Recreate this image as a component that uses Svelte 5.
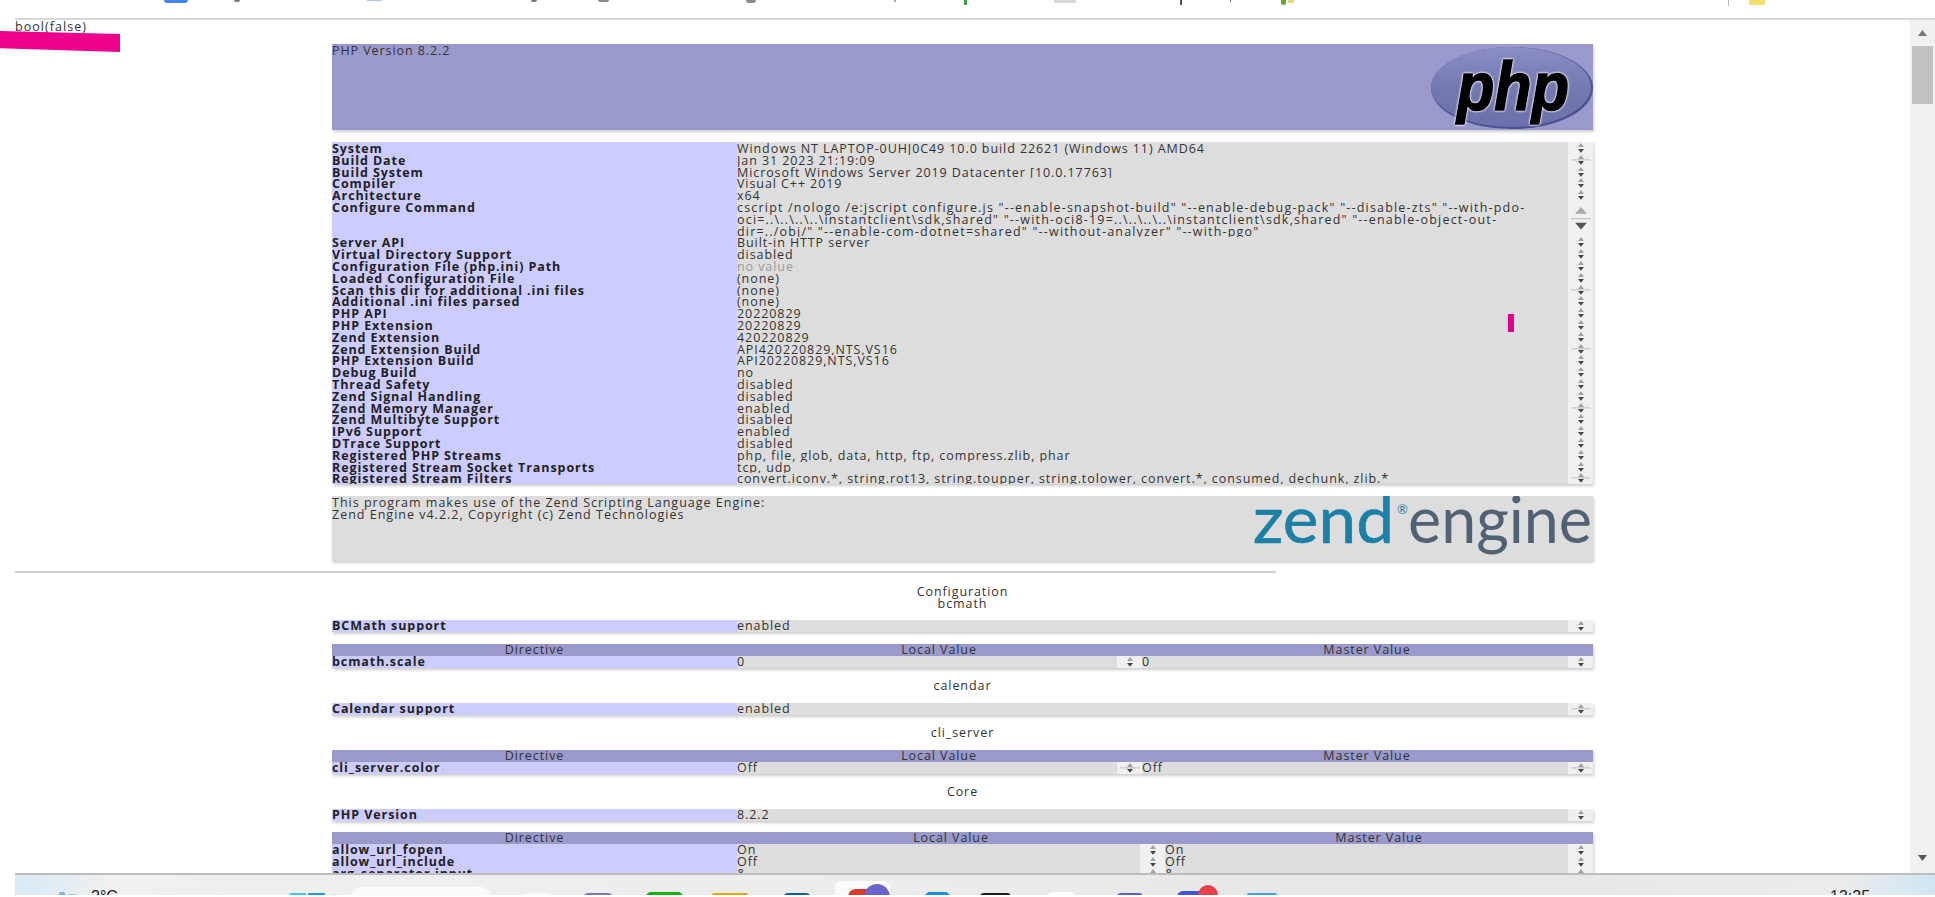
<script>
  const strip = [
    { x: 164, w: 24, h: 3, c: '#4285f4', r: '0 0 4px 4px' },
    { x: 234, w: 6, h: 2, c: '#777', r: '0 0 4px 4px' },
    { x: 367, w: 15, h: 1, c: '#a9c4f5', r: '0' },
    { x: 531, w: 6, h: 2, c: '#777', r: '0 0 4px 4px' },
    { x: 598, w: 11, h: 2, c: '#8a8a8a', r: '0 0 4px 4px' },
    { x: 746, w: 10, h: 3, c: '#8a8a8a', r: '0 0 4px 4px' },
    { x: 894, w: 2, h: 2, c: '#aaa', r: '0' },
    { x: 964, w: 3, h: 5, c: '#3c9a4a', r: '0' },
    { x: 1054, w: 22, h: 3, c: '#d8d8d8', r: '0' },
    { x: 1180, w: 2, h: 5, c: '#555', r: '0' },
    { x: 1230, w: 1, h: 2, c: '#777', r: '0' },
    { x: 1281, w: 5, h: 5, c: '#6aa52e', r: '0 0 3px 3px' },
    { x: 1288, w: 6, h: 3, c: '#dcd98a', r: '0' },
    { x: 1728, w: 1, h: 6, c: '#bbb', r: '0' },
    { x: 1749, w: 16, h: 5, c: '#f7dc6f', r: '0 0 2px 2px' }
  ]

  const dock = [
    { x: 59, w: 6, y: 17, h: 5, c: '#7fb2dc', r: '2px' },
    { x: 68, w: 8, y: 19, h: 3, c: '#9cc6e6', r: '2px' },
    { x: 290, w: 16, y: 18, h: 4, c: '#3cc4f2', r: '1px 1px 0 0' },
    { x: 308, w: 17, y: 18, h: 4, c: '#1e9ae0', r: '1px 1px 0 0' },
    { x: 351, w: 140, y: 12, h: 10, c: '#fbfbfb', r: '14px 14px 0 0' },
    { x: 524, w: 26, y: 18, h: 4, c: '#fafafa', r: '2px 2px 0 0' },
    { x: 584, w: 28, y: 18, h: 4, c: '#7a74c4', r: '14px 14px 0 0' },
    { x: 646, w: 37, y: 17, h: 5, c: '#12b312', r: '6px 6px 0 0' },
    { x: 712, w: 36, y: 18, h: 4, c: '#e3a61d', r: '2px 2px 0 0' },
    { x: 784, w: 26, y: 18, h: 4, c: '#0a5cad', r: '12px 12px 0 0' },
    { x: 835, w: 55, y: 6, h: 16, c: '#fafafa', r: '6px 6px 0 0' },
    { x: 848, w: 30, y: 14, h: 8, c: '#e0392b', r: '15px 15px 0 0' },
    { x: 864, w: 26, y: 9, h: 13, c: '#6a63c9', r: '13px 13px 0 0' },
    { x: 925, w: 25, y: 17, h: 5, c: '#1b8fe0', r: '12px 12px 0 0' },
    { x: 980, w: 31, y: 18, h: 4, c: '#1b1b24', r: '6px 6px 0 0' },
    { x: 1047, w: 28, y: 17, h: 5, c: '#ffffff', r: '14px 14px 0 0' },
    { x: 1117, w: 26, y: 18, h: 4, c: '#5a5fd0', r: '13px 13px 0 0' },
    { x: 1177, w: 30, y: 16, h: 6, c: '#4353d8', r: '15px 15px 0 0' },
    { x: 1198, w: 20, y: 10, h: 12, c: '#e8424c', r: '10px 10px 0 0' },
    { x: 1247, w: 30, y: 18, h: 4, c: '#3fa2e8', r: '2px 2px 0 0' },
    { x: 1308, w: 35, y: 20, h: 2, c: '#7d7d7d', r: '2px 2px 0 0' }
  ]

  const general = [
    { k: 'System', v: 'Windows NT LAPTOP-0UHJ0C49 10.0 build 22621 (Windows 11) AMD64' },
    { k: 'Build Date', v: 'Jan 31 2023 21:19:09', line: true },
    { k: 'Build System', v: 'Microsoft Windows Server 2019 Datacenter [10.0.17763]' },
    { k: 'Compiler', v: 'Visual C++ 2019' },
    { k: 'Architecture', v: 'x64' },
    {
      k: 'Configure Command',
      v: 'cscript /nologo /e:jscript configure.js "--enable-snapshot-build" "--enable-debug-pack" "--disable-zts" "--with-pdo-oci=..\\..\\..\\..\\instantclient\\sdk,shared" "--with-oci8-19=..\\..\\..\\..\\instantclient\\sdk,shared" "--enable-object-out-dir=../obj/" "--enable-com-dotnet=shared" "--without-analyzer" "--with-pgo"',
      big: true
    },
    { k: 'Server API', v: 'Built-in HTTP server' },
    { k: 'Virtual Directory Support', v: 'disabled' },
    { k: 'Configuration File (php.ini) Path', v: 'no value', muted: true },
    { k: 'Loaded Configuration File', v: '(none)' },
    { k: 'Scan this dir for additional .ini files', v: '(none)', line: true },
    { k: 'Additional .ini files parsed', v: '(none)' },
    { k: 'PHP API', v: '20220829' },
    { k: 'PHP Extension', v: '20220829' },
    { k: 'Zend Extension', v: '420220829' },
    { k: 'Zend Extension Build', v: 'API420220829,NTS,VS16', line: true },
    { k: 'PHP Extension Build', v: 'API20220829,NTS,VS16' },
    { k: 'Debug Build', v: 'no' },
    { k: 'Thread Safety', v: 'disabled' },
    { k: 'Zend Signal Handling', v: 'disabled' },
    { k: 'Zend Memory Manager', v: 'enabled', line: true },
    { k: 'Zend Multibyte Support', v: 'disabled' },
    { k: 'IPv6 Support', v: 'enabled' },
    { k: 'DTrace Support', v: 'disabled' },
    { k: 'Registered PHP Streams', v: 'php, file, glob, data, http, ftp, compress.zlib, phar' },
    { k: 'Registered Stream Socket Transports', v: 'tcp, udp' },
    { k: 'Registered Stream Filters', v: 'convert.iconv.*, string.rot13, string.toupper, string.tolower, convert.*, consumed, dechunk, zlib.*', line: true }
  ]

  const allow = [
    { k: 'allow_url_fopen', a: 'On', b: 'On' },
    { k: 'allow_url_include', a: 'Off', b: 'Off' },
    { k: 'arg_separator.input', a: '&', b: '&' }
  ]
</script>

{#snippet spin(line = false, big = false)}
  <span class="gutter">
    {#if big}
      <svg width="24" height="35.4" viewBox="0 0 24 36">
        <polygon points="12,6 18,13 6,13" fill="#a8a8a8" />
        <line x1="2" y1="18" x2="22" y2="18" stroke="#bbb" />
        <polygon points="6,22 18,22 12,29" fill="#555" />
      </svg>
    {:else}
      <svg width="24" height="11.8" viewBox="0 0 24 12">
        {#if line}
          <line x1="2" y1="6" x2="22" y2="6" stroke="#bbb" />
        {/if}
        <polygon points="12,1 15,5 9,5" fill="#a0a0a0" />
        <polygon points="9,7 15,7 12,11" fill="#444" />
      </svg>
    {/if}
  </span>
{/snippet}

{#snippet pair(k, v, line = false)}
  <div class="table">
    <div class="row two">
      <span class="key">{k}</span>
      <span class="val">{v}</span>
      {@render spin(line)}
    </div>
  </div>
{/snippet}

{#snippet directive(k, a, b, wide = false, line = false)}
  <div class="row three" class:wide>
    <span class="key">{k}</span>
    <span class="val">{a}</span>
    {@render spin(line)}
    <span class="val">{b}</span>
    {@render spin(line)}
  </div>
{/snippet}

{#snippet head(wide = false)}
  <div class="row head" class:wide>
    <span>Directive</span>
    <span>Local Value</span>
    <span>Master Value</span>
  </div>
{/snippet}

<div class="screen">
  <div class="strip">
    {#each strip as s}
      <i style="left:{s.x}px;width:{s.w}px;height:{s.h}px;background:{s.c};border-radius:{s.r}"></i>
    {/each}
  </div>

  <div class="main">
    <div class="content">
      <div class="dump">bool(false)</div>
      <div class="caret"></div>

      <div class="center">
        <div class="banner">
          <span class="version">PHP Version 8.2.2</span>
          <svg class="php" width="164" height="86" viewBox="0 0 164 86">
            <defs>
              <linearGradient id="oval" x1="0" y1="0" x2="0" y2="1">
                <stop offset="0" stop-color="#8a8ec4" />
                <stop offset="0.5" stop-color="#7579b2" />
                <stop offset="1" stop-color="#6c70ab" />
              </linearGradient>
            </defs>
            <ellipse cx="82" cy="44" rx="81" ry="41" fill="#4c5291" />
            <ellipse cx="81" cy="43" rx="80" ry="40" fill="url(#oval)" />
            <text class="php-mark" x="27" y="66" textLength="112" lengthAdjust="spacingAndGlyphs">php</text>
          </svg>
        </div>

        <div class="table">
          {#each general as r}
            <div class="row two">
              <span class="key">{r.k}</span>
              <span class="val" class:muted={r.muted} class:long={r.big}>{r.v}</span>
              {@render spin(r.line, r.big)}
            </div>
          {/each}
        </div>

        <div class="zend">
          <div class="zend-text">
            This program makes use of the Zend Scripting Language Engine:<br />
            Zend Engine v4.2.2, Copyright (c) Zend Technologies
          </div>
          <svg width="340" height="65" viewBox="0 0 340 65">
            <text class="zend-mark" x="0" y="47" textLength="141" lengthAdjust="spacingAndGlyphs">zend</text>
            <text class="reg" x="144" y="18">®</text>
            <text class="engine-mark" x="155" y="47" textLength="184" lengthAdjust="spacingAndGlyphs">engine</text>
          </svg>
        </div>
      </div>

      <div class="rule"></div>

      <div class="center sections">
        <h2 class="first">Configuration<br />bcmath</h2>
        {@render pair('BCMath support', 'enabled')}
        <div class="table">
          {@render head()}
          {@render directive('bcmath.scale', '0', '0')}
        </div>

        <h2>calendar</h2>
        {@render pair('Calendar support', 'enabled', true)}

        <h2>cli_server</h2>
        <div class="table">
          {@render head()}
          {@render directive('cli_server.color', 'Off', 'Off', false, true)}
        </div>

        <h2>Core</h2>
        {@render pair('PHP Version', '8.2.2')}
        <div class="table tail">
          {@render head(true)}
          {#each allow as r}
            {@render directive(r.k, r.a, r.b, true)}
          {/each}
        </div>
      </div>
    </div>

    <div class="scrollbar">
      <svg width="25" height="26" viewBox="0 0 25 26"><polygon points="12.5,10 17,16 8,16" fill="#777" /></svg>
      <div class="thumb"></div>
      <div class="track"></div>
      <svg width="25" height="22" viewBox="0 0 25 22"><polygon points="8,4 17,4 12.5,10" fill="#555" /></svg>
    </div>
  </div>

  <div class="taskbar">
    <span class="weather">2°C</span>
    <span class="clock">13:25</span>
    {#each dock as d}
      <i style="left:{d.x}px;top:{d.y}px;width:{d.w}px;height:{d.h}px;background:{d.c};border-radius:{d.r}"></i>
    {/each}
  </div>

  <div class="marker"></div>
</div>

<style>
  :global(body) {
    margin: 0;
    background: #fff;
  }

  .screen {
    position: relative;
    width: 1935px;
    height: 897px;
    overflow: hidden;
    display: flex;
    flex-direction: column;
    font-family: "Open Sans", "Noto Sans", sans-serif;
    font-size: 12.5px;
    line-height: 11.8px;
    letter-spacing: 0.92px;
    color: #333;
  }

  .strip {
    position: relative;
    height: 18px;
    flex: none;
    overflow: hidden;
  }

  .strip i {
    position: absolute;
    top: 0;
  }

  .main {
    height: 855px;
    flex: none;
    display: flex;
    position: relative;
    border-top: 2px solid #d8d8d8;
    margin-left: 15px;
    box-sizing: border-box;
    overflow: hidden;
  }

  .content {
    width: 1895px;
    position: relative;
    overflow: hidden;
  }

  .dump {
    height: 12px;
    padding-top: 1px;
    margin-bottom: -1px;
    letter-spacing: 1.05px;
  }

  .marker {
    position: absolute;
    left: 0;
    top: 31px;
    width: 120px;
    height: 21px;
    background: #ec008c;
    clip-path: polygon(0 0, 100% 14%, 100% 100%, 0 82%);
  }

  .caret {
    position: absolute;
    left: 1493px;
    top: 294px;
    width: 6px;
    height: 18px;
    background: #e0008c;
  }

  .center {
    width: 1261px;
    margin: 0 auto;
  }

  .banner {
    margin-top: 12px;
    height: 86px;
    background: #9999cc;
    box-shadow: 1px 2px 3px #ccc;
    display: flex;
    justify-content: space-between;
    color: #333;
    overflow: hidden;
  }

  .version {
    padding-top: 1px;
  }

  .php {
    flex: none;
    margin-right: -1px;
  }

  .php-mark {
    font-family: "Liberation Sans", sans-serif;
    font-weight: 700;
    font-style: italic;
    font-size: 68px;
    letter-spacing: 0;
    fill: #000;
    stroke: #000;
    stroke-width: 1.6px;
    filter: drop-shadow(0 0 0.8px #fff) drop-shadow(0 0 0.5px #fff);
  }

  /* the label colour sits on the table, so a label's descenders stay visible over the next row */
  .table {
    margin-top: 12px;
    box-shadow: 1px 2px 3px #ccc;
    overflow: hidden;
    background: linear-gradient(90deg, #ccccff 405px, #ddd 405px);
  }

  .row {
    display: grid;
  }

  /* text sits a pixel low in the first table's rows */
  .row > span {
    padding-top: 1px;
    margin-bottom: -1px;
  }

  .row > .gutter,
  .sections .row > span {
    padding-top: 0;
    margin-bottom: 0;
  }

  .two {
    grid-template-columns: 405px 1fr 25px;
  }

  .three {
    grid-template-columns: 405px 380px 25px 1fr 25px;
  }

  .three.wide {
    grid-template-columns: 405px 403px 25px 1fr 25px;
  }

  .key {
    font-weight: 700;
    color: #222;
    position: relative;
    z-index: 1;
  }

  .val {
    overflow: hidden;
    overflow-wrap: anywhere;
    padding-right: 35px;
  }

  .three .val {
    padding-right: 0;
  }

  .muted {
    color: #999;
  }

  .long {
    letter-spacing: 1.19px;
  }

  .gutter {
    background: #f0f0f0;
    display: flex;
    justify-content: center;
    align-items: center;
    overflow: hidden;
  }

  .head {
    background: #9999cc;
    grid-template-columns: 405px 404px 1fr;
    text-align: center;
    color: #333;
  }

  .head.wide {
    grid-template-columns: 405px 428px 1fr;
  }

  .zend {
    margin-top: 12px;
    height: 65px;
    background: #ddd;
    box-shadow: 1px 2px 3px #ccc;
    display: flex;
    justify-content: space-between;
  }

  .zend-text {
    padding-top: 1px;
    letter-spacing: 1px;
  }

  .zend-mark {
    font-family: Lato, sans-serif;
    font-size: 66px;
    letter-spacing: 0;
    fill: #1b7fa6;
    stroke: #1b7fa6;
    stroke-width: 0.6px;
  }

  .engine-mark {
    font-family: Lato, sans-serif;
    font-size: 66px;
    letter-spacing: 0;
    fill: #506274;
  }

  .reg {
    font-family: Lato, sans-serif;
    font-size: 13px;
    letter-spacing: 0;
    fill: #1b7fa6;
  }

  .rule {
    width: 1261px;
    height: 2px;
    background: #d0d0d0;
    margin-top: 10px;
  }

  .sections {
    line-height: 12px;
  }

  .tail {
    line-height: 11.8px;
    margin-top: 11px;
  }

  h2 {
    margin: 12px 0 11px;
    font: inherit;
    letter-spacing: inherit;
    text-align: center;
  }

  h2.first {
    margin-top: 13px;
    margin-bottom: 11px;
    line-height: 11.5px;
  }

  .sections h2 + .table {
    margin-top: 0;
  }

  .scrollbar {
    width: 25px;
    background: #f1f1f1;
    flex: none;
    display: flex;
    flex-direction: column;
    align-items: center;
  }

  .thumb {
    width: 21px;
    height: 58px;
    background: #c1c1c1;
    flex: none;
  }

  .track {
    flex: 1;
  }

  .taskbar {
    position: relative;
    height: 22px;
    flex: none;
    margin-left: 15px;
    box-sizing: border-box;
    border-top: 2px solid #bdbdbd;
    background: linear-gradient(90deg, #d8eaf6 0, #f0f0f0 5%, #ececec 45%, #e6e6e6 75%, #ececec 95%, #cfe6f2 100%);
    overflow: hidden;
  }

  .taskbar i {
    position: absolute;
    margin-left: -15px;
  }

  .weather,
  .clock {
    position: absolute;
    font-family: "Liberation Sans", sans-serif;
    font-size: 16px;
    letter-spacing: 0;
    line-height: 16px;
    color: #222;
    top: 14px;
  }

  .weather {
    left: 76px;
  }

  .clock {
    left: 1815px;
  }
</style>
